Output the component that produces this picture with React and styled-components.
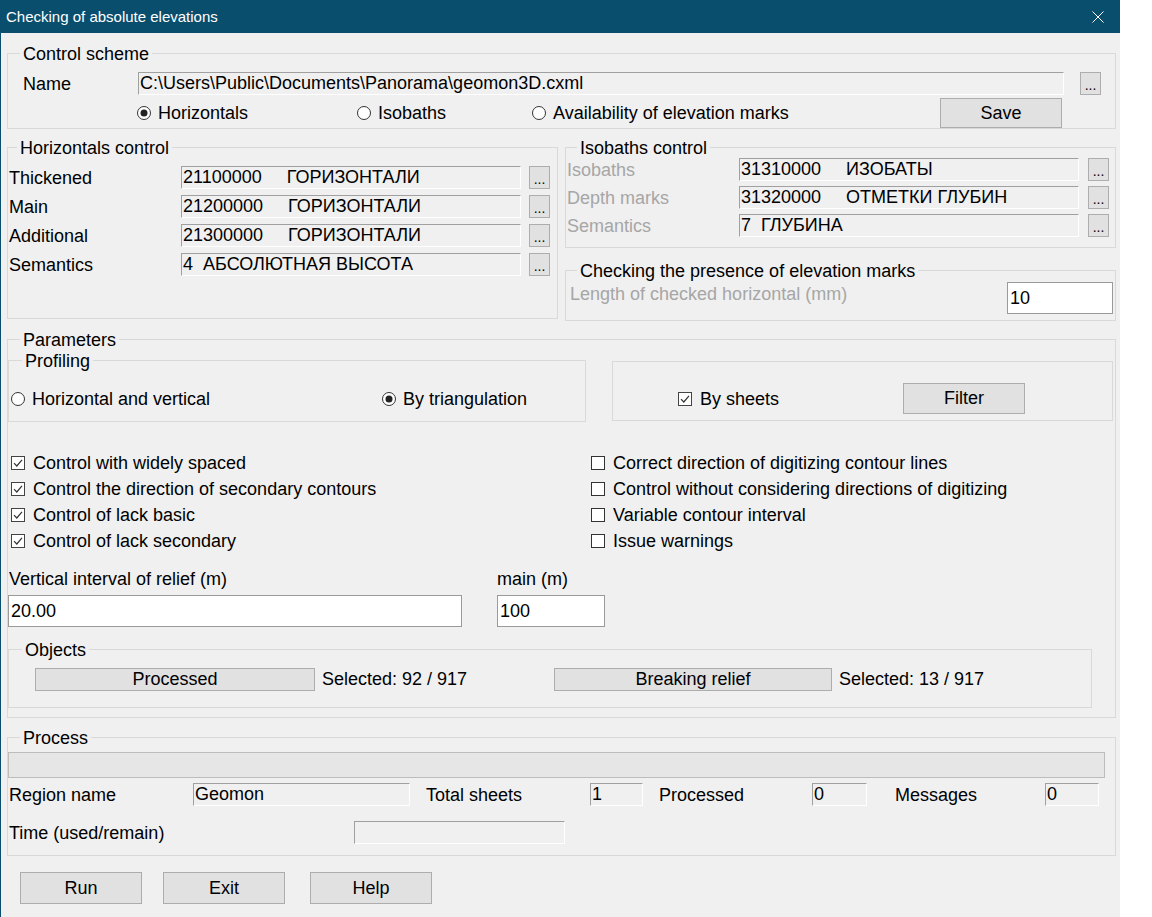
import React from 'react';
import styled, { createGlobalStyle } from 'styled-components';

const Global = createGlobalStyle`
  html, body { margin: 0; padding: 0; background: #fff; }
  body { font-family: "Liberation Sans", Arial, sans-serif; }
  *, *::before, *::after { box-sizing: border-box; }
`;

const Window = styled.div`
  width: 1120px;
  height: 917px;
  background: #f0f0f0;
  border-left: 1px solid #0a4e6e;
  font-size: 18px;
  color: #000;
  display: flex;
  flex-direction: column;
`;

const TitleBar = styled.div`
  height: 33px;
  flex: none;
  background: #0a4e6e;
  color: #fff;
  font-size: 15px;
  display: flex;
  align-items: center;
  justify-content: space-between;
  padding-left: 5px;
`;

const CloseBox = styled.div`
  width: 44px;
  height: 33px;
  display: flex;
  align-items: center;
  justify-content: center;
`;

const Body = styled.div`
  padding: 0 4px 0 6px;
  display: flex;
  flex-direction: column;
`;

const Group = styled.div`
  position: relative;
  border: 1px solid #d9d9d9;
  margin-top: ${p => p.$mt || 0}px;
  margin-left: ${p => p.$ml || 0}px;
  padding: ${p => p.$pt || 0}px ${p => p.$pr || 0}px ${p => p.$pb || 0}px ${p => p.$pl || 0}px;
  ${p => p.$w ? `width: ${p.$w}px; flex: none;` : ''}
  ${p => p.$h ? `height: ${p.$h}px;` : ''}
`;

const Legend = styled.span`
  position: absolute;
  top: -10px;
  left: ${p => p.$left}px;
  padding: 0 3px;
  background: #f0f0f0;
  line-height: 20px;
  white-space: nowrap;
`;

const Row = styled.div`
  display: flex;
  align-items: ${p => (p.$top ? 'flex-start' : 'center')};
  height: ${p => p.$h || 23}px;
  margin-top: ${p => p.$mt || 0}px;
  ${p => p.$between ? 'justify-content: space-between;' : ''}
`;

const Label = styled.span`
  flex: none;
  width: ${p => (p.$w ? `${p.$w}px` : 'auto')};
  margin-left: ${p => p.$ml || 0}px;
  margin-top: ${p => p.$mt || 0}px;
  color: ${p => (p.$disabled ? '#a6a6a6' : '#000')};
  white-space: nowrap;
  line-height: 20px;
`;

const ReadField = styled.div`
  flex: none;
  width: ${p => p.$w}px;
  height: 23px;
  border-top: 1px solid #a0a0a0;
  border-left: 1px solid #a0a0a0;
  border-right: 1px solid #fff;
  border-bottom: 1px solid #fff;
  background: #f0f0f0;
  padding-left: 1px;
  line-height: 21px;
  white-space: pre;
  overflow: hidden;
`;

const WhiteInput = styled.div`
  flex: none;
  width: ${p => p.$w}px;
  height: 32px;
  margin-top: ${p => p.$mt || 0}px;
  background: #fff;
  border: 1px solid #9a9a9a;
  padding-left: 2px;
  line-height: 30px;
`;

const DotsButton = styled.div`
  flex: none;
  width: 21px;
  height: 23px;
  margin-left: ${p => p.$ml || 0}px;
  border: 1px solid #adadad;
  background: #e1e1e1;
  font-size: 14px;
  line-height: 1;
  display: flex;
  align-items: flex-end;
  justify-content: center;
  padding-bottom: 2px;
`;

const Button = styled.div`
  flex: none;
  width: ${p => p.$w}px;
  height: ${p => p.$h}px;
  margin-left: ${p => p.$ml || 0}px;
  border: 1px solid #adadad;
  background: #e1e1e1;
  display: flex;
  align-items: center;
  justify-content: center;
  white-space: nowrap;
`;

const Choice = styled.div`
  flex: none;
  display: flex;
  align-items: center;
  gap: ${p => p.$gap || 7}px;
  width: ${p => (p.$w ? `${p.$w}px` : 'auto')};
  margin-left: ${p => p.$ml || 0}px;
  white-space: nowrap;
  line-height: 20px;
  svg { flex: none; }
`;

const Columns = styled.div`
  display: flex;
  align-items: flex-start;
  gap: ${p => p.$gap || 0}px;
  margin-top: ${p => p.$mt || 0}px;
`;

const Stack = styled.div`
  display: flex;
  flex-direction: column;
  width: ${p => p.$w}px;
  flex: none;
`;

const CheckGrid = styled.div`
  display: grid;
  grid-template-columns: 580px 1fr;
  grid-auto-rows: 26px;
  align-items: center;
  margin-top: ${p => p.$mt}px;
  padding-left: 3px;
`;

const Progress = styled.div`
  width: 1097px;
  height: 26px;
  background: #e6e6e6;
  border: 1px solid #bcbcbc;
`;

const Pair = styled.div`
  flex: none;
  display: flex;
  align-items: center;
  width: ${p => (p.$w ? `${p.$w}px` : 'auto')};
`;

const Count = styled.span`
  margin-left: 7px;
  white-space: nowrap;
`;

const ButtonBar = styled.div`
  display: flex;
  margin-top: 16px;
`;

const RadioIcon = ({ on }) => (
  <svg width="14" height="14" viewBox="0 0 14 14">
    <circle cx="7" cy="7" r="6.5" fill="#fff" stroke="#333" />
    {on && <circle cx="7" cy="7" r="3.5" fill="#222" />}
  </svg>
);

const CheckIcon = ({ on }) => (
  <svg width="14" height="14" viewBox="0 0 14 14">
    <rect x="0.5" y="0.5" width="13" height="13" fill="#fff" stroke={on ? '#444' : '#333'} />
    {on && <path d="M3 7.2 L5.8 10 L11 3.8" fill="none" stroke="#333" strokeWidth="1.2" />}
  </svg>
);

const Radio = ({ on, children, ...rest }) => (
  <Choice {...rest}>
    <RadioIcon on={on} />
    <span>{children}</span>
  </Choice>
);

const Check = ({ on, children, ...rest }) => (
  <Choice $gap={8} {...rest}>
    <CheckIcon on={on} />
    <span>{children}</span>
  </Choice>
);

const horizRows = [
  ['Thickened', '21100000     ГОРИЗОНТАЛИ'],
  ['Main', '21200000     ГОРИЗОНТАЛИ'],
  ['Additional', '21300000     ГОРИЗОНТАЛИ'],
  ['Semantics', '4  АБСОЛЮТНАЯ ВЫСОТА'],
];

const isoRows = [
  ['Isobaths', '31310000     ИЗОБАТЫ'],
  ['Depth marks', '31320000     ОТМЕТКИ ГЛУБИН'],
  ['Semantics', '7  ГЛУБИНА'],
];

const checksLeft = [
  'Control with widely spaced',
  'Control the direction of secondary contours',
  'Control of lack basic',
  'Control of lack secondary',
];
const checksRight = [
  'Correct direction of digitizing contour lines',
  'Control without considering directions of digitizing',
  'Variable contour interval',
  'Issue warnings',
];

export default function App() {
  return (
    <>
      <Global />
      <Window>
        <TitleBar>
          <span>Checking of absolute elevations</span>
          <CloseBox>
            <svg width="12" height="12" viewBox="0 0 12 12">
              <path d="M0.5 0.5 L11.5 11.5 M11.5 0.5 L0.5 11.5" stroke="#fff" strokeWidth="1" />
            </svg>
          </CloseBox>
        </TitleBar>
        <Body>
          <Group $mt={20} $pt={18} $pl={15}>
            <Legend $left={12}>Control scheme</Legend>
            <Row>
              <Label $w={115}>Name</Label>
              <ReadField $w={926}>{'C:\\Users\\Public\\Documents\\Panorama\\geomon3D.cxml'}</ReadField>
              <DotsButton $ml={16}>...</DotsButton>
            </Row>
            <Row $h={30} $mt={3}>
              <Radio on $w={220} $ml={114}>Horizontals</Radio>
              <Radio $w={175}>Isobaths</Radio>
              <Radio $w={408}>Availability of elevation marks</Radio>
              <Button $w={122} $h={30}>Save</Button>
            </Row>
          </Group>

          <Columns $mt={18} $gap={7}>
            <Group $w={551} $h={172} $pt={18} $pl={1}>
              <Legend $left={9}>Horizontals control</Legend>
              {horizRows.map(([l, v], i) => (
                <Row key={l} $mt={i ? 6 : 0}>
                  <Label $w={172}>{l}</Label>
                  <ReadField $w={340}>{v}</ReadField>
                  <DotsButton $ml={8}>...</DotsButton>
                </Row>
              ))}
            </Group>
            <Stack $w={551}>
              <Group $pt={10} $pl={1} $pb={10}>
                <Legend $left={11}>Isobaths control</Legend>
                {isoRows.map(([l, v], i) => (
                  <Row key={l} $mt={i ? 5 : 0}>
                    <Label $w={172} $disabled>{l}</Label>
                    <ReadField $w={340}>{v}</ReadField>
                    <DotsButton $ml={9}>...</DotsButton>
                  </Row>
                ))}
              </Group>
              <Group $mt={22} $pt={11} $pl={4} $pr={2} $pb={6}>
                <Legend $left={11}>Checking the presence of elevation marks</Legend>
                <Row $h={32} $between $top>
                  <Label $disabled $mt={2}>Length of checked horizontal (mm)</Label>
                  <WhiteInput $w={106}>10</WhiteInput>
                </Row>
              </Group>
            </Stack>
          </Columns>

          <Group $mt={18} $pb={9}>
            <Legend $left={12}>Parameters</Legend>
            <Columns $mt={20}>
              <Group $w={578} $h={62} $pt={28} $pl={2}>
                <Legend $left={13}>Profiling</Legend>
                <Row $h={20}>
                  <Radio $w={371}>Horizontal and vertical</Radio>
                  <Radio on>By triangulation</Radio>
                </Row>
              </Group>
              <Group $w={501} $h={60} $ml={26} $mt={1} $pt={21}>
                <Row $h={31}>
                  <Check on $w={225} $ml={65}>By sheets</Check>
                  <Button $w={122} $h={31}>Filter</Button>
                </Row>
              </Group>
            </Columns>
            <CheckGrid $mt={28}>
              {checksLeft.map((t, i) => (
                <React.Fragment key={t}>
                  <Check on>{t}</Check>
                  <Check>{checksRight[i]}</Check>
                </React.Fragment>
              ))}
            </CheckGrid>
            <Columns $mt={15}>
              <Stack $w={489}>
                <Label $ml={1}>Vertical interval of relief (m)</Label>
                <WhiteInput $w={454} $mt={6}>20.00</WhiteInput>
              </Stack>
              <Stack $w={200}>
                <Label>main (m)</Label>
                <WhiteInput $w={108} $mt={6}>100</WhiteInput>
              </Stack>
            </Columns>
            <Group $mt={22} $w={1084} $pt={18} $pb={16} $pl={26}>
              <Legend $left={13}>Objects</Legend>
              <Row>
                <Pair $w={519}>
                  <Button $w={280} $h={23}>Processed</Button>
                  <Count>Selected: 92 / 917</Count>
                </Pair>
                <Pair>
                  <Button $w={278} $h={23}>Breaking relief</Button>
                  <Count>Selected: 13 / 917</Count>
                </Pair>
              </Row>
            </Group>
          </Group>

          <Group $mt={19} $pt={14} $pb={11}>
            <Legend $left={12}>Process</Legend>
            <Progress />
            <Row $mt={5}>
              <Label $w={184} $ml={1}>Region name</Label>
              <ReadField $w={217}>Geomon</ReadField>
              <Label $w={164} $ml={16}>Total sheets</Label>
              <ReadField $w={53}>1</ReadField>
              <Label $w={153} $ml={16}>Processed</Label>
              <ReadField $w={55}>0</ReadField>
              <Label $w={150} $ml={28}>Messages</Label>
              <ReadField $w={54}>0</ReadField>
            </Row>
            <Row $mt={15}>
              <Label $w={345} $ml={1}>Time (used/remain)</Label>
              <ReadField $w={211} />
            </Row>
          </Group>

          <ButtonBar>
            <Button $w={122} $h={32} $ml={13}>Run</Button>
            <Button $w={122} $h={32} $ml={21}>Exit</Button>
            <Button $w={122} $h={32} $ml={25}>Help</Button>
          </ButtonBar>
        </Body>
      </Window>
    </>
  );
}
